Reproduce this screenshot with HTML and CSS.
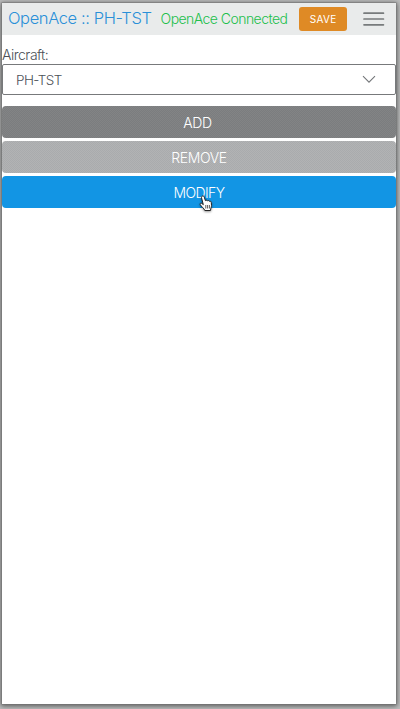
FILE: index.html
```html
<!DOCTYPE html>
<html lang="en">
<head>
<meta charset="utf-8">
<title>OpenAce</title>
<link rel="stylesheet" href="styles.css">
</head>
<body>
<div class="window">
  <header class="header">
    <h1 class="title">OpenAce :: PH-TST</h1>
    <span class="status">OpenAce Connected</span>
    <button class="save">SAVE</button>
    <svg class="menu" width="22" height="14" viewBox="0 0 22 14"><path d="M1 1.2H20.5M1 7H20.5M1 12.8H20.5" fill="none" stroke="#777b7c" stroke-width="1.7" stroke-linecap="round"/></svg>
  </header>
  <main class="content">
    <div class="label">Aircraft:</div>
    <div class="select"><span>PH-TST</span>
      <svg width="14" height="9" viewBox="0 0 14 9"><path d="M1 1.2L7 7.2L13 1.2" fill="none" stroke="#74777a" stroke-width="1.1"/></svg>
    </div>
    <div class="actions">
      <button class="action add">ADD</button>
      <button class="action remove">REMOVE</button>
      <button class="action modify">MODIFY</button>
    </div>
  </main>
</div>
<svg class="cursor" width="14" height="17" viewBox="0 0 14 17"><path d="M3.2 1.2C4.2.5 5 1.3 5.3 2.2L6.4 5.7C7 4.9 8 5.1 8.4 5.9C9.1 5.3 10 5.5 10.4 6.3C11.4 5.9 12.2 6.5 12.3 7.6L12.5 10.5C12.5 12 11.7 13 11.5 15.5H5.8C5.1 13.3 2.5 11.8 1.2 9.6C.7 8.3 2 7.7 3 8.5L4.3 9.7L2.6 3C2.3 2.2 2.5 1.6 3.2 1.2Z" fill="#fff" stroke="#222" stroke-width="1"/><path d="M6.8 10V13.5M8.6 10V13.5M10.4 10V13.5" stroke="#333" stroke-width=".8"/></svg>
</body>
</html>
```

FILE: styles.css
```css
* { box-sizing: border-box; }
body {
  margin: 0;
  height: 709px;
  padding: 3px 4px 5px 2px;
  overflow: hidden;
  background: #bdbebe;
  font-family: Inter, "Liberation Sans", sans-serif;
  font-weight: 300;
  color: #4c5157;
}
.window {
  height: 701px;
  background: #fff;
  box-shadow: 0 0 0 .5px #777, 0 1px 5px 1px rgba(0, 0, 0, .55);
}
.header {
  display: flex;
  align-items: center;
  height: 32px;
  padding: 0 11px 0 6px;
  background: #e9ebeb;
}
.title {
  width: 153px;
  margin: 0;
  padding-bottom: 2px;
  font-size: 16.5px;
  font-weight: 300;
  line-height: 30px;
  letter-spacing: -.4px;
  white-space: nowrap;
  color: #2a90d8;
}
.status {
  width: 139px;
  padding-bottom: 2px;
  font-size: 14px;
  letter-spacing: -.55px;
  white-space: nowrap;
  color: #22bf4b;
}
button {
  border: 0;
  padding: 0;
  font-family: inherit;
  font-weight: 300;
  color: #fff;
}
.save {
  width: 48px;
  height: 24px;
  border-radius: 3px;
  background: #df8a25;
  font-size: 10px;
  font-weight: 400;
  letter-spacing: .3px;
}
.menu { margin-left: 16px; }
.label {
  height: 29px;
  padding-top: 10px;
  font-size: 14px;
  line-height: 19px;
  letter-spacing: -.5px;
}
.select {
  display: flex;
  align-items: center;
  justify-content: space-between;
  height: 31px;
  padding: 0 19px 0 13px;
  border: 1px solid #77797b;
  border-radius: 2px;
  font-size: 13.5px;
  letter-spacing: -.6px;
}
.actions {
  display: grid;
  gap: 3px;
  padding-top: 11px;
}
.action {
  height: 32px;
  border-radius: 4px;
  font-size: 14px;
  letter-spacing: -.4px;
}
.add {
  padding-right: 3px;
  background: repeating-conic-gradient(#7b7d7f 0 25%, #838485 0 50%) 0 0 / 2px 2px;
}
.remove { background: repeating-conic-gradient(#a9abad 0 25%, #b2b3b4 0 50%) 0 0 / 2px 2px; }
.modify {
  background: #1295e4;
  letter-spacing: -.6px;
}
.cursor {
  position: absolute;
  left: 199px;
  top: 195px;
  filter: drop-shadow(0 1px 1px rgba(0, 0, 0, .4));
}
```
